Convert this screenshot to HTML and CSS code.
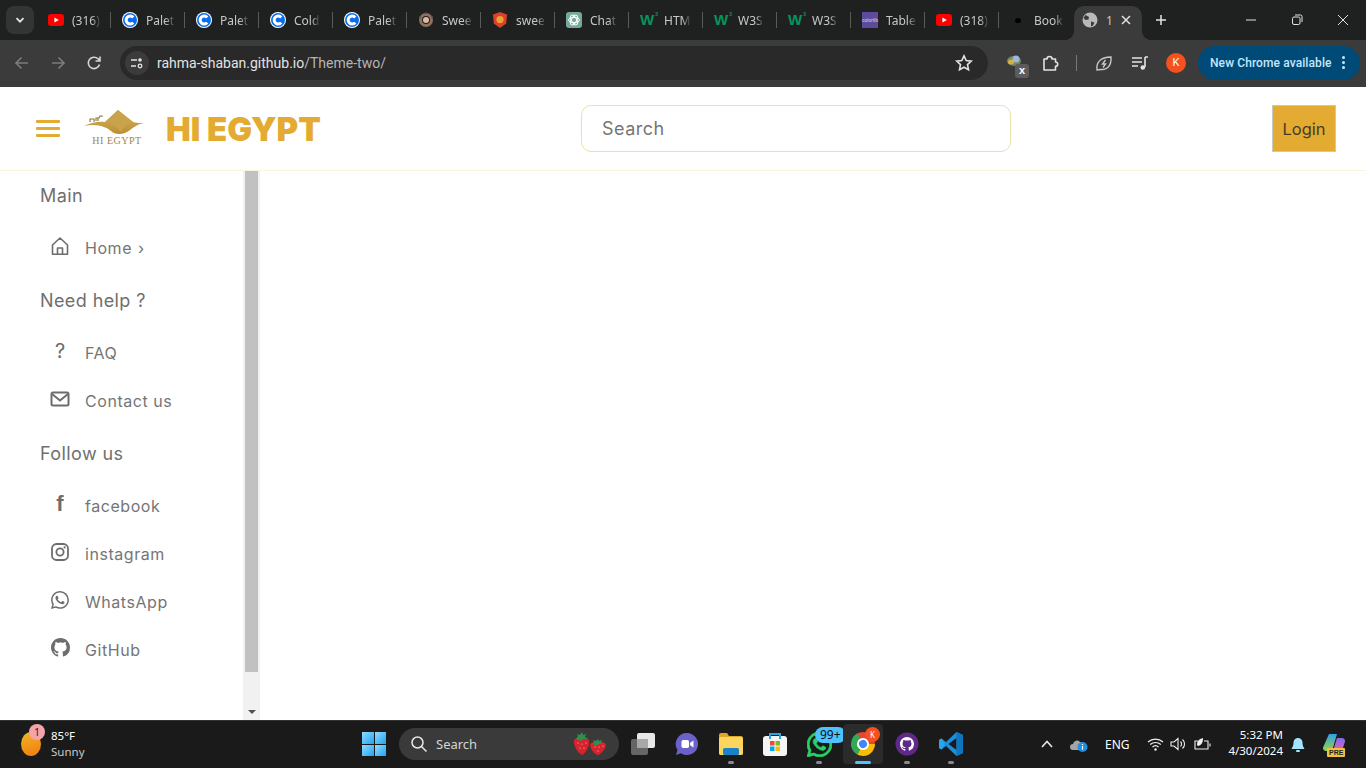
FILE: index.html
```html
<!DOCTYPE html>
<html lang="en">

<head>
    <meta charset="UTF-8">
    <title>HI EGYPT</title>
    <link rel="stylesheet" href="styles.css">
</head>

<body>

    <svg class="defs" width="0" height="0">
        <symbol id="yt" viewBox="0 0 16 12"><rect width="16" height="12" rx="3" fill="#f00"/><polygon points="6.4,3.4 10.8,6 6.4,8.6" fill="#fff"/></symbol>
        <symbol id="coolors" viewBox="0 0 16 16"><circle cx="8" cy="8" r="8" fill="#fff"/><circle cx="8" cy="8" r="7" fill="#0a6df0"/><path d="M11.2 5.4a4 4 0 1 0 0 5.2" fill="none" stroke="#fff" stroke-width="3"/></symbol>
        <symbol id="wicon" viewBox="0 0 16 16"><circle cx="8" cy="8" r="5.5" fill="none" stroke="#8d6f62" stroke-width="3"/><circle cx="8" cy="8" r="3" fill="#e0b9a0"/><circle cx="8" cy="1.2" r="1" fill="#555"/><circle cx="14" cy="5" r="1" fill="#555"/><circle cx="2" cy="5" r="1" fill="#555"/></symbol>
        <symbol id="shield" viewBox="0 0 16 16"><path d="M8 0l7 2.4-.8 9L8 16l-6.2-4.6-.8-9z" fill="#d9412c"/><circle cx="8" cy="7.6" r="3.6" fill="#eba02f"/></symbol>
        <symbol id="gpt" viewBox="0 0 16 16"><rect width="16" height="16" rx="3" fill="#74aa9c"/><g fill="none" stroke="#fff" stroke-width="1"><ellipse cx="8" cy="8" rx="5.4" ry="2.6"/><ellipse cx="8" cy="8" rx="5.4" ry="2.6" transform="rotate(60 8 8)"/><ellipse cx="8" cy="8" rx="5.4" ry="2.6" transform="rotate(120 8 8)"/></g></symbol>
        <symbol id="house" viewBox="0 0 20 20"><path d="M2.5 9 10 2l7.5 7v9.2h-15zM7.5 18v-6h5v6" fill="none" stroke="currentColor" stroke-width="1.6" stroke-linejoin="round"/></symbol>
        <symbol id="mail" viewBox="0 0 20 20"><rect x="1.5" y="3.5" width="17" height="13" rx="1.5" fill="none" stroke="currentColor" stroke-width="2"/><path d="m2 5 8 6.5L18 5" fill="none" stroke="currentColor" stroke-width="2"/></symbol>
        <symbol id="insta" viewBox="0 0 20 20"><rect x="2" y="2" width="16" height="16" rx="4.5" fill="none" stroke="currentColor" stroke-width="1.8"/><circle cx="10" cy="10" r="3.6" fill="none" stroke="currentColor" stroke-width="1.8"/><circle cx="14.6" cy="5.4" r="1.1" fill="currentColor"/></symbol>
        <symbol id="whats" viewBox="0 0 16 16"><path fill="currentColor" d="M13.601 2.326A7.854 7.854 0 0 0 7.994 0C3.627 0 .068 3.558.064 7.926c0 1.399.366 2.76 1.057 3.965L0 16l4.204-1.102a7.933 7.933 0 0 0 3.79.965h.004c4.368 0 7.926-3.558 7.93-7.93A7.898 7.898 0 0 0 13.6 2.326zM7.994 14.521a6.573 6.573 0 0 1-3.356-.92l-.24-.144-2.494.654.666-2.433-.156-.251a6.56 6.56 0 0 1-1.007-3.505c0-3.626 2.957-6.584 6.591-6.584a6.56 6.56 0 0 1 4.66 1.931 6.557 6.557 0 0 1 1.928 4.66c-.004 3.639-2.961 6.592-6.592 6.592zm3.615-4.934c-.197-.099-1.17-.578-1.353-.646-.182-.065-.315-.099-.445.099-.133.197-.513.646-.627.775-.114.133-.232.148-.43.05-.197-.1-.836-.308-1.592-.985-.59-.525-.985-1.175-1.103-1.372-.114-.198-.011-.304.088-.403.087-.088.197-.232.296-.346.1-.114.133-.198.198-.33.065-.134.034-.248-.015-.347-.05-.099-.445-1.076-.612-1.47-.16-.389-.323-.335-.445-.34-.114-.007-.247-.007-.38-.007a.729.729 0 0 0-.529.247c-.182.198-.691.677-.691 1.654 0 .977.71 1.916.81 2.049.098.133 1.394 2.132 3.383 2.992.47.205.84.326 1.129.418.475.152.904.129 1.246.08.38-.058 1.171-.48 1.338-.943.164-.464.164-.86.114-.943-.049-.084-.182-.133-.38-.232z"/></symbol>
        <symbol id="octo" viewBox="0 0 16 16"><path fill="currentColor" d="M8 0C3.58 0 0 3.58 0 8c0 3.54 2.29 6.53 5.47 7.59.4.07.55-.17.55-.38 0-.19-.01-.82-.01-1.49-2.01.37-2.53-.49-2.69-.94-.09-.23-.48-.94-.82-1.13-.28-.15-.68-.52-.01-.53.63-.01 1.08.58 1.23.82.72 1.21 1.87.87 2.33.66.07-.52.28-.87.51-1.07-1.78-.2-3.64-.89-3.64-3.95 0-.87.31-1.59.82-2.15-.08-.2-.36-1.02.08-2.12 0 0 .67-.21 2.2.82.64-.18 1.32-.27 2-.27.68 0 1.36.09 2 .27 1.53-1.04 2.2-.82 2.2-.82.44 1.1.16 1.92.08 2.12.51.56.82 1.27.82 2.15 0 3.07-1.87 3.75-3.65 3.95.29.25.54.73.54 1.48 0 1.07-.01 1.93-.01 2.2 0 .21.15.46.55.38A8.013 8.013 0 0016 8c0-4.42-3.58-8-8-8z"/></symbol>
    </svg>

    <div class="tabstrip">
        <div class="tab-menu">
            <svg width="12" height="12" viewBox="0 0 12 12"><path d="m2.5 4.2 3.5 3.5 3.5-3.5" fill="none" stroke="#e3e3e3" stroke-width="1.8"/></svg>
        </div>
        <div class="tab"><svg class="fav" viewBox="0 0 16 16"><use href="#yt" y="2" height="12" width="16"/></svg><span class="tab-name">(316)</span></div>
        <div class="tab"><svg class="fav"><use href="#coolors"/></svg><span class="tab-name">Palet</span></div>
        <div class="tab"><svg class="fav"><use href="#coolors"/></svg><span class="tab-name">Palet</span></div>
        <div class="tab"><svg class="fav"><use href="#coolors"/></svg><span class="tab-name">Cold</span></div>
        <div class="tab"><svg class="fav"><use href="#coolors"/></svg><span class="tab-name">Palet</span></div>
        <div class="tab"><svg class="fav"><use href="#wicon"/></svg><span class="tab-name">Swee</span></div>
        <div class="tab"><svg class="fav"><use href="#shield"/></svg><span class="tab-name">swee</span></div>
        <div class="tab"><svg class="fav"><use href="#gpt"/></svg><span class="tab-name">Chat</span></div>
        <div class="tab"><span class="w3">W<sup>3</sup></span><span class="tab-name">HTM</span></div>
        <div class="tab"><span class="w3">W<sup>3</sup></span><span class="tab-name">W3S</span></div>
        <div class="tab"><span class="w3">W<sup>3</sup></span><span class="tab-name">W3S</span></div>
        <div class="tab"><span class="colorlib">colorlib</span><span class="tab-name">Table</span></div>
        <div class="tab"><svg class="fav" viewBox="0 0 16 16"><use href="#yt" y="2" height="12" width="16"/></svg><span class="tab-name">(318)</span></div>
        <div class="tab last"><span class="fav book-dot"></span><span class="tab-name">Book</span></div>
        <div class="tab-active">
            <svg class="fav" viewBox="0 0 16 16"><circle cx="8" cy="8" r="7.5" fill="#b9b9b9"/><path d="M3.5 3 7 5l-.5 2.5L3.5 8l-2-2zM9 9.5l3.5 1-1.5 3L9 14.5z" fill="#3b3b3b"/></svg>
            <span class="tab-name short">1</span>
            <svg class="tab-x" width="10" height="10" viewBox="0 0 10 10"><path d="m1 1 8 8M9 1 1 9" stroke="#e3e3e3" stroke-width="1.5"/></svg>
        </div>
        <svg class="tab-plus" width="12" height="12" viewBox="0 0 12 12"><path d="M6 1v10M1 6h10" stroke="#e3e3e3" stroke-width="1.5"/></svg>
        <div class="win-ctrls">
            <svg width="12" height="12" viewBox="0 0 12 12"><path d="M1 6h10" stroke="#e3e3e3"/></svg>
            <svg width="12" height="12" viewBox="0 0 12 12"><rect x="1.5" y="3" width="7.5" height="7.5" rx="1.5" fill="none" stroke="#e3e3e3"/><path d="M4 1h5.5A1.5 1.5 0 0 1 11 2.5V8" fill="none" stroke="#e3e3e3"/></svg>
            <svg width="12" height="12" viewBox="0 0 12 12"><path d="m1 1 10 10M11 1 1 11" stroke="#e3e3e3"/></svg>
        </div>
    </div>

    <div class="toolbar">
        <div class="tool-btn"><svg width="16" height="16" viewBox="0 0 16 16"><path d="M14 8H2.5M7.5 2.5 2 8l5.500 5.500" fill="none" stroke="#7c7c7c" stroke-width="1.6"/></svg></div>
        <div class="tool-btn"><svg width="16" height="16" viewBox="0 0 16 16"><path d="M2 8h11.5M8.5 2.5 14 8l-5.500 5.500" fill="none" stroke="#7c7c7c" stroke-width="1.6"/></svg></div>
        <div class="tool-btn"><svg width="16" height="16" viewBox="0 0 16 16"><path d="M13.5 9.5A5.700 5.700 0 1 1 12 3.800L14 6M14 1.500V6H9.500" fill="none" stroke="#d5d5d5" stroke-width="1.6"/></svg></div>
        <div class="omnibox">
            <div class="site-info">
                <svg width="14" height="14" viewBox="0 0 14 14"><g fill="none" stroke="#e3e3e3" stroke-width="1.3"><path d="M1 4h6M1 10h5"/><circle cx="10" cy="4" r="1.8" fill="#e3e3e3" stroke="none"/><circle cx="10" cy="10" r="1.8"/></g></svg>
            </div>
            <span class="url">rahma-shaban.github.io<span class="url-path">/Theme-two/</span></span>
            <svg class="star" width="18" height="18" viewBox="0 0 18 18"><path d="m9 1.800 2.200 4.700 5.100.6-3.800 3.500 1 5.100L9 13.200l-4.500 2.500 1-5.100-3.800-3.500 5.100-.6z" fill="none" stroke="#e3e3e3" stroke-width="1.6"/></svg>
        </div>
        <div class="tool-right">
            <div class="tool-item">
                <svg class="ext-icon" width="16" height="14" viewBox="0 0 16 14"><ellipse cx="8" cy="7" rx="7" ry="5" fill="#6f8a5c"/><ellipse cx="5" cy="8" rx="3" ry="2.5" fill="#d8b13c"/><circle cx="10" cy="5" r="3.5" fill="#9db7d8"/></svg>
                <span class="ext-badge">x</span>
            </div>
            <div class="tool-item"><svg width="18" height="18" viewBox="0 0 18 18"><path d="M3 5h3a2.500 2.500 0 0 1 5 0h3.500v3a2.200 2.200 0 0 1 0 4.400V16H3z" fill="none" stroke="#e3e3e3" stroke-width="1.6" stroke-linejoin="round"/></svg></div>
            <span class="tool-sep"></span>
            <div class="tool-item"><svg width="18" height="18" viewBox="0 0 18 18"><path d="M2 16C1 9 5 3 16 3c.5 8-3 13-10 12.500zM10.500 6 7.500 10h3L8 13.500" fill="none" stroke="#c7c7c7" stroke-width="1.4"/></svg></div>
            <div class="tool-item"><svg width="18" height="18" viewBox="0 0 18 18"><path d="M1 4h10M1 8h10M1 12h6" stroke="#e3e3e3" stroke-width="1.6"/><path d="M14 3v10M14 3h3" stroke="#e3e3e3" stroke-width="1.6"/><circle cx="11.8" cy="13.5" r="2.3" fill="#e3e3e3"/></svg></div>
            <div class="tool-item"><span class="avatar">K</span></div>
            <div class="update-pill">New Chrome available<span class="dots"><i></i><i></i><i></i></span></div>
        </div>
    </div>

    <div class="page">
        <header class="site-header">
            <div class="brand">
                <div class="burger"><span></span><span></span><span></span></div>
                <div class="logo">
                    <svg width="62" height="27" viewBox="0 0 62 27">
                        <defs><linearGradient id="sand" x1="0" y1="0" x2="0" y2="1"><stop offset="0" stop-color="#d9b45c"/><stop offset="1" stop-color="#b98f35"/></linearGradient></defs>
                        <path d="M0 17C6 14 14 12 21 13L34 1 49 13C52 14 56 14 60 14 54 15 50 18 46 21 40 26 31 26 27 22 23 18 12 14 0 17z" fill="url(#sand)"/>
                        <path d="M34 1 49 13C44 15 39 18 37 23 33 18 28 15 21 13z" fill="#c9a24c"/>
                        <path d="M6 13v-3h4v3M12 12V9h3l1-2h2v1M14 9v3" stroke="#8a743f" stroke-width="1.1" fill="none"/>
                    </svg>
                    <span class="logo-text">HI EGYPT</span>
                </div>
                <h1 class="site-name">HI EGYPT</h1>
            </div>
            <input class="search" type="text" placeholder="Search">
            <button class="login">Login</button>
        </header>

        <div class="page-body">
            <aside class="sidebar">
                <div class="side-inner">
                    <h2 class="side-title">Main</h2>
                    <a class="side-link"><span class="side-icon"><svg width="20" height="20"><use href="#house"/></svg></span>Home <span class="caret">›</span></a>

                    <h2 class="side-title">Need help ?</h2>
                    <a class="side-link"><span class="side-icon glyph">?</span>FAQ</a>
                    <a class="side-link"><span class="side-icon"><svg width="20" height="20"><use href="#mail"/></svg></span>Contact us</a>

                    <h2 class="side-title">Follow us</h2>
                    <a class="side-link"><span class="side-icon glyph fb">f</span>facebook</a>
                    <a class="side-link"><span class="side-icon"><svg width="20" height="20"><use href="#insta"/></svg></span>instagram</a>
                    <a class="side-link"><span class="side-icon"><svg width="18" height="18"><use href="#whats"/></svg></span>WhatsApp</a>
                    <a class="side-link"><span class="side-icon"><svg width="19" height="19"><use href="#octo"/></svg></span>GitHub</a>
                </div>
                <div class="scrollbar">
                    <div class="thumb"></div>
                    <div class="arrow"></div>
                </div>
            </aside>
            <main class="content"></main>
        </div>
    </div>

    <footer class="taskbar">
        <div class="weather">
            <span class="sun"><span class="sun-badge">1</span></span>
            <div class="weather-text"><span>85°F</span><span class="dim">Sunny</span></div>
        </div>
        <div class="win-logo"><i></i><i></i><i></i><i></i></div>
        <div class="task-search">
            <svg width="18" height="18" viewBox="0 0 18 18"><circle cx="7.5" cy="7.5" r="5.5" fill="none" stroke="#e8e8e8" stroke-width="1.5"/><path d="m11.5 11.5 5 5" stroke="#e8e8e8" stroke-width="1.5"/></svg>
            <span>Search</span>
            <svg class="berries" width="34" height="24" viewBox="0 0 34 24">
                <path d="M1 8C4 4 13 4 16 8 17 14 13 21 9 23 5 21 0 14 1 8z" fill="#d8232f"/>
                <path d="M17 12C20 9 29 9 33 12 33 17 28 22 25 23 21 22 17 17 17 12z" fill="#d8232f"/>
                <path d="M3 7l2-3-1-2 3 1 2-3 1 3 3-1-1 3 3 2-5 0-2 2zM20 12l1-2-1-2 3 1 2-2 1 2 3-1-1 3 3 1-5 0-3 2z" fill="#2f8f4e"/>
                <g fill="#f6c9a0"><circle cx="5" cy="11" r=".6"/><circle cx="9" cy="12" r=".6"/><circle cx="13" cy="11" r=".6"/><circle cx="7" cy="16" r=".6"/><circle cx="11" cy="16" r=".6"/><circle cx="22" cy="15" r=".6"/><circle cx="26" cy="15" r=".6"/><circle cx="30" cy="14" r=".6"/><circle cx="25" cy="19" r=".6"/></g>
            </svg>
        </div>
        <div class="task-apps">
            <div class="app"><svg width="24" height="22" viewBox="0 0 24 22"><rect x="0" y="6" width="17" height="16" rx="2" fill="#666"/><rect x="6" y="0" width="18" height="15" rx="2" fill="#e8e8e8"/><rect x="6" y="6" width="11" height="9" fill="#a8a8a8"/></svg></div>
            <div class="app"><svg width="24" height="24" viewBox="0 0 24 24"><path d="M12 1a11 11 0 1 1-6 20.200L1 23l1.500-5A11 11 0 0 1 12 1z" fill="#6b62c9"/><rect x="6.5" y="8" width="7.5" height="8" rx="1.8" fill="#fff"/><path d="m15 11 3.500-2.500v7L15 13z" fill="#fff"/></svg></div>
            <div class="app open"><svg width="24" height="22" viewBox="0 0 24 22"><path d="M0 2a2 2 0 0 1 2-2h6l2 3h12a2 2 0 0 1 2 2v15a2 2 0 0 1-2 2H2a2 2 0 0 1-2-2z" fill="#e0a526"/><rect y="4" width="24" height="18" rx="2" fill="#fcd55f"/><rect x="4" y="15" width="16" height="7" rx="1.5" fill="#1a82c8"/></svg></div>
            <div class="app"><svg width="24" height="24" viewBox="0 0 24 24"><rect y="4" width="24" height="20" rx="3" fill="#f4f4f4"/><path d="M7 7V2h10v5" fill="none" stroke="#27a7e0" stroke-width="2"/><rect x="7" y="9" width="4.5" height="4.5" fill="#ee4d2d"/><rect x="12.5" y="9" width="4.5" height="4.5" fill="#7cb82f"/><rect x="7" y="14.5" width="4.5" height="4.5" fill="#00a4ef"/><rect x="12.5" y="14.5" width="4.5" height="4.5" fill="#ffb900"/></svg></div>
            <div class="app open">
                <svg class="whats-app" width="25" height="25"><use href="#whats"/></svg>
                <span class="count">99+</span>
            </div>
            <div class="app current">
                <span class="chrome"><span class="chrome-core"></span></span>
                <span class="chrome-badge">K</span>
            </div>
            <div class="app open"><svg width="24" height="24" viewBox="0 0 24 24"><circle cx="12" cy="12" r="11.5" fill="#5f2a87"/><svg x="5" y="5" width="14" height="14" class="octo-white"><use href="#octo"/></svg></svg></div>
            <div class="app open"><svg width="24" height="24" viewBox="0 0 24 24"><path d="M17.5 0 24 3v18l-6.500 3L7 14l-4.500 3.500L0 16V8l2.500-1.500L7 10z" fill="#1b8fd9"/><path d="M17.5 6v12L9.500 12z" fill="#1a1a1a"/><path d="M17.5 0 24 3v18l-6.500 3z" fill="#0f75bc"/><path d="m0 8 2.500-1.500L6 12l-3.500 5.500L0 16z" fill="#2aa5e8"/></svg></div>
        </div>
        <div class="tray">
            <svg class="tray-chev" width="12" height="8" viewBox="0 0 12 8"><path d="m1 7 5-5.500L11 7" fill="none" stroke="#e8e8e8" stroke-width="1.6"/></svg>
            <svg class="tray-cloud" width="18" height="14" viewBox="0 0 18 14"><path d="M3 12a3 3 0 0 1 0-6 4 4 0 0 1 7-2h3v8z" fill="#a5a5a5"/><circle cx="12.5" cy="9" r="5" fill="#1e90e0"/><path d="M12.5 8v3.500M12.500 6v1" stroke="#fff" stroke-width="1.2"/></svg>
            <span class="lang">ENG</span>
            <svg class="tray-wifi" width="17" height="14" viewBox="0 0 17 14"><g fill="none" stroke="#f0f0f0" stroke-width="1.2"><path d="M1 5a11 11 0 0 1 15 0M3.200 7.500a8 8 0 0 1 10.600 0M5.500 10a4.500 4.500 0 0 1 6 0"/></g><circle cx="8.5" cy="12.5" r="1.2" fill="#f0f0f0"/></svg>
            <svg class="tray-vol" width="17" height="14" viewBox="0 0 17 14"><path d="M1 5h3l4-3.500v11L4 9H1zM10.500 4.500a3.500 3.500 0 0 1 0 5M12.500 2.500a6 6 0 0 1 0 9" fill="none" stroke="#f0f0f0" stroke-width="1.1"/></svg>
            <svg class="tray-batt" width="18" height="14" viewBox="0 0 18 14"><path d="M4 4H1v8h13V4h-4M16 6.500v3" fill="none" stroke="#f0f0f0" stroke-width="1.1"/><path d="M3 8c0-4 2-6 6-7 0 4-1 7-5 8z" fill="#f0f0f0"/></svg>
            <div class="clock"><span>5:32 PM</span><span>4/30/2024</span></div>
            <svg class="tray-bell" width="16" height="16" viewBox="0 0 16 16"><path d="M8 1a4.500 4.500 0 0 1 4.500 4.500c0 4 1.500 5 2 6.500h-13c.5-1.500 2-2.500 2-6.500A4.500 4.500 0 0 1 8 1z" fill="#a5e4ff"/><rect x="6" y="13" width="4" height="2" rx="1" fill="#a5e4ff"/></svg>
            <div class="copilot">
                <svg width="24" height="19" viewBox="0 0 24 19">
                    <defs>
                        <linearGradient id="cop-a" x1="0" y1="0" x2="0" y2="1"><stop offset="0" stop-color="#2f9fe8"/><stop offset="1" stop-color="#9ad04a"/></linearGradient>
                        <linearGradient id="cop-b" x1="0" y1="0" x2="0" y2="1"><stop offset="0" stop-color="#7a6cf0"/><stop offset="1" stop-color="#ee5db5"/></linearGradient>
                    </defs>
                    <path d="M7 1h8l-5 17H4a3 3 0 0 1-3-3.500z" fill="url(#cop-a)"/>
                    <path d="M15 5h5a3 3 0 0 1 3 3.500L20 18h-9z" fill="url(#cop-b)"/>
                </svg>
                <span class="pre">PRE</span>
            </div>
        </div>
    </footer>

</body>

</html>
```

FILE: styles.css
```css
* {
    box-sizing: border-box;
}

html,
body {
    height: 100%;
}

body {
    margin: 0;
    overflow: hidden;
    background: #fff;
    font-family: "Noto Sans", "Liberation Sans", sans-serif;
}

.defs {
    display: block;
    height: 0;
}

/* browser tabs */
.tabstrip {
    height: 40px;
    background: #1f2121;
    display: flex;
    color: #c7c7c7;
    font-size: 12px;
    padding-left: 6px;
}

.tab-menu {
    width: 28px;
    height: 28px;
    margin: 6px 3px 0 0;
    border-radius: 8px;
    background: #333535;
    display: flex;
    align-items: center;
    justify-content: center;
}

.tab {
    position: relative;
    width: 74px;
    display: flex;
    align-items: center;
    gap: 8px;
    padding-left: 11px;
}

.tab::after {
    content: "";
    position: absolute;
    right: 0;
    top: 12px;
    height: 16px;
    width: 1px;
    background: #5a5a5a;
}

.tab.last::after {
    display: none;
}

.fav {
    width: 16px;
    height: 16px;
    flex: none;
}

.book-dot {
    display: flex;
    align-items: center;
    justify-content: center;
}

.book-dot::before {
    content: "";
    width: 6px;
    height: 5px;
    border-radius: 50%;
    background: #000;
}

.tab-name {
    -webkit-mask-image: linear-gradient(90deg, #000 70%, transparent 105%);
    mask-image: linear-gradient(90deg, #000 70%, transparent 105%);
    white-space: nowrap;
}

.tab-name.short {
    -webkit-mask-image: none;
    mask-image: none;
}

.w3 {
    position: relative;
    width: 16px;
    flex: none;
    color: #04955f;
    font: bold 15px/16px "Liberation Sans", sans-serif;
    letter-spacing: -1px;
    white-space: nowrap;
}

.w3 sup {
    position: absolute;
    right: -1px;
    top: -1px;
    font-size: 5px;
    line-height: 6px;
    color: #04955f;
}

.colorlib {
    width: 16px;
    height: 16px;
    flex: none;
    background: #5d4a9c;
    color: #ddd;
    font: 5px/16px "Liberation Sans", sans-serif;
    text-align: center;
}

.tab-active {
    position: relative;
    width: 68px;
    height: 34px;
    margin: 6px 0 0 1px;
    padding: 0 0 6px 8px;
    background: #3b3b3b;
    border-radius: 10px 10px 0 0;
    display: flex;
    align-items: center;
    gap: 8px;
}

.tab-active::before,
.tab-active::after {
    content: "";
    position: absolute;
    bottom: 0;
    width: 10px;
    height: 10px;
}

.tab-active::before {
    left: -10px;
    background: radial-gradient(circle at 0 0, transparent 10px, #3b3b3b 10.5px);
}

.tab-active::after {
    right: -10px;
    background: radial-gradient(circle at 100% 0, transparent 10px, #3b3b3b 10.5px);
}

.tab-plus {
    margin: 14px 0 0 13px;
}

.win-ctrls {
    margin-left: auto;
    width: 121px;
    padding-right: 17px;
    display: flex;
    align-items: center;
    justify-content: space-between;
}

/* toolbar */
.toolbar {
    height: 47px;
    background: #3b3b3b;
    display: flex;
    align-items: flex-start;
    padding: 6px 6px 0 4px;
}

.tool-btn {
    width: 36px;
    height: 34px;
    display: flex;
    align-items: center;
    justify-content: center;
}

.omnibox {
    width: 868px;
    height: 34px;
    margin-left: 8px;
    border-radius: 17px;
    background: #292929;
    display: flex;
    align-items: center;
    padding: 0 15px 0 5px;
}

.site-info {
    width: 24px;
    height: 24px;
    border-radius: 50%;
    background: #3b3b3b;
    display: flex;
    align-items: center;
    justify-content: center;
}

.url {
    margin: 0 0 1px 8px;
    color: #e3e3e3;
    font: 14px Roboto, sans-serif;
}

.url-path {
    color: #b5b5b5;
}

.star {
    margin-left: auto;
}

.tool-right {
    margin-left: 11px;
    display: flex;
    align-items: center;
}

.tool-item {
    position: relative;
    width: 34px;
    height: 34px;
    display: flex;
    align-items: center;
    justify-content: center;
}

.ext-icon {
    margin: -4px 4px 0 0;
}

.tool-sep {
    width: 1px;
    height: 16px;
    margin: 0 10px 0 9px;
    background: #777;
}

.tool-sep + .tool-item + .tool-item,
.tool-sep + .tool-item + .tool-item + .tool-item {
    margin-left: 2px;
}

.ext-badge {
    position: absolute;
    right: 4px;
    bottom: 2px;
    width: 14px;
    height: 14px;
    border-radius: 3px;
    background: #5c5c5c;
    color: #fff;
    font: bold 11px/13px "Liberation Sans", sans-serif;
    text-align: center;
}

.avatar {
    width: 20px;
    height: 20px;
    border-radius: 50%;
    background: #f4511e;
    color: #fff;
    font: 11px/20px Roboto, sans-serif;
    text-align: center;
}

.update-pill {
    width: 162px;
    height: 34px;
    margin-left: 5px;
    padding: 0 0 1px 12px;
    border-radius: 17px;
    background: #004a77;
    color: #c2e7ff;
    font: 500 12px Roboto, sans-serif;
    letter-spacing: .1px;
    display: flex;
    align-items: center;
    white-space: nowrap;
}

.dots {
    margin-left: 10px;
    display: flex;
    flex-direction: column;
    gap: 2px;
}

.dots i {
    width: 3px;
    height: 3px;
    border-radius: 50%;
    background: #c2e7ff;
}

/* the site */
.page {
    height: 633px;
    display: flex;
    flex-direction: column;
    font-family: Inter, "Noto Sans", sans-serif;
}

.site-header {
    height: 84px;
    flex: none;
    border-bottom: 1px solid #f8f3dc;
    display: flex;
    align-items: center;
    padding: 0 30px 0 36px;
}

.brand {
    width: 545px;
    display: flex;
    align-items: center;
}

.burger {
    width: 24px;
    display: flex;
    flex-direction: column;
    gap: 4px;
}

.burger span {
    height: 3px;
    background: #e3ab31;
    border-radius: 1px;
}

.logo {
    width: 62px;
    margin: 0 0 3px 24px;
    display: flex;
    flex-direction: column;
    align-items: center;
}

.logo-text {
    margin: -1px 0 0 4px;
    color: #9b8557;
    font: 10px/11px "Liberation Serif", serif;
    letter-spacing: .5px;
}

.site-name {
    margin: 0 0 0 20px;
    color: #e3ab31;
    font-size: 33px;
    font-weight: 900;
    white-space: nowrap;
}

.search {
    width: 430px;
    height: 47px;
    padding: 0 20px;
    border: 1px solid #ebe1a9;
    border-radius: 10px;
    background: #fff;
    font: 18px Inter, sans-serif;
    letter-spacing: .5px;
    outline: none;
}

.search::placeholder {
    color: #757575;
    opacity: 1;
}

.login {
    width: 64px;
    height: 47px;
    margin-left: auto;
    padding: 0;
    border: 1px solid #c8c8c8;
    background: #e3ab31;
    color: #4a3c25;
    font: 16.5px Inter, sans-serif;
}

.page-body {
    flex: 1;
    display: flex;
    min-height: 0;
}

.sidebar {
    width: 260px;
    flex: none;
    display: flex;
}

.side-inner {
    flex: 1;
    padding-top: 12px;
    color: #6f6f6f;
}

.side-title {
    height: 27px;
    margin: 16px 0 14px 40px;
    color: #6f6f6f;
    font-size: 18px;
    font-weight: 400;
    line-height: 25px;
    letter-spacing: .4px;
}

.side-title:first-child {
    margin-top: 0;
}

.side-link {
    height: 48px;
    display: flex;
    align-items: center;
    padding-left: 50px;
    color: #757575;
    font-size: 16px;
    letter-spacing: .55px;
    white-space: pre;
}

.side-icon {
    width: 20px;
    height: 22px;
    margin: 0 15px 5px 0;
    color: #6d6d6d;
    display: flex;
    align-items: center;
    justify-content: center;
    flex: none;
}

.glyph {
    font-size: 20px;
    letter-spacing: 0;
}

.fb {
    font: bold 22px "Liberation Sans", sans-serif;
}

.caret {
    margin-left: 1px;
}

.scrollbar {
    width: 17px;
    flex: none;
    background: #f1f1f1;
    display: flex;
    flex-direction: column;
    align-items: center;
}

.thumb {
    width: 13px;
    height: 501px;
    background: #c1c1c1;
}

.arrow {
    margin-top: auto;
    margin-bottom: 6px;
    border: 4px solid transparent;
    border-top: 4px solid #505050;
    border-bottom: 0;
}

.content {
    flex: 1;
}

/* windows taskbar */
.taskbar {
    height: 48px;
    padding-bottom: 1px;
    background: #1a1a1a;
    border-top: 1px solid #333;
    color: #fff;
    display: flex;
    align-items: center;
    position: relative;
}

.weather {
    width: 362px;
    display: flex;
    align-items: center;
    padding-left: 21px;
}

.sun {
    position: relative;
    width: 20px;
    height: 24px;
    border-radius: 50%;
    background: linear-gradient(160deg, #f0b62c, #f27a0a);
}

.sun-badge {
    position: absolute;
    left: 8px;
    top: -8px;
    width: 16px;
    height: 16px;
    border-radius: 50%;
    background: #f4a3ad;
    color: #222;
    font-size: 10.5px;
    line-height: 16px;
    text-align: center;
}

.weather-text {
    margin-left: 10px;
    display: flex;
    flex-direction: column;
    font-size: 11.5px;
    line-height: 16px;
}

.dim {
    color: #c9c9c9;
}

.win-logo {
    width: 24px;
    height: 24px;
    display: grid;
    grid-template-columns: 1fr 1fr;
    gap: 1px;
}

.win-logo i {
    background: linear-gradient(135deg, #8fdcff, #1fa3f5);
}

.task-search {
    width: 220px;
    height: 32px;
    margin-left: 13px;
    border-radius: 16px;
    background: #3a3a3a;
    display: flex;
    align-items: center;
    padding-left: 11px;
    gap: 8px;
    font-size: 13px;
    color: #d5d5d5;
}

.berries {
    margin-left: auto;
    margin-right: 12px;
}

.task-apps {
    display: flex;
    margin-left: 2px;
}

.app {
    position: relative;
    width: 44px;
    height: 40px;
    display: flex;
    align-items: center;
    justify-content: center;
}

.app.open::after,
.app.current::after {
    content: "";
    position: absolute;
    left: 19px;
    bottom: 0;
    width: 6px;
    height: 3px;
    border-radius: 2px;
    background: #8a8a8a;
}

.app.current {
    background: #2b2b2b;
    border-radius: 4px;
    width: 40px;
    margin: 0 2px;
}

.app.current::after {
    left: 12px;
    width: 16px;
    background: #4cc2ff;
}

.whats-app {
    color: #25d366;
    stroke: #25d366;
    stroke-width: .5;
}

.count {
    position: absolute;
    left: 18px;
    top: 3px;
    padding: 0 5px;
    height: 16px;
    border-radius: 8px;
    background: #4cc2ff;
    color: #111;
    font-size: 12px;
    line-height: 16px;
}

.chrome {
    width: 24px;
    height: 24px;
    border-radius: 50%;
    background: conic-gradient(#ea4335 0 33%, #fbbc04 33% 66%, #34a853 66% 100%);
    transform: rotate(-30deg);
    display: flex;
    align-items: center;
    justify-content: center;
}

.chrome-core {
    width: 12px;
    height: 12px;
    border: 2px solid #fff;
    border-radius: 50%;
    background: #4285f4;
}

.chrome-badge {
    position: absolute;
    right: 3px;
    top: 3px;
    width: 15px;
    height: 15px;
    border-radius: 50%;
    background: #f4511e;
    color: #fff;
    font-size: 8px;
    line-height: 15px;
    text-align: center;
}

.octo-white {
    color: #fff;
}

.tray {
    position: absolute;
    inset: 0;
    pointer-events: none;
}

.tray > * {
    position: absolute;
}

.tray-chev {
    left: 1041px;
    top: 19px;
}

.tray-cloud {
    left: 1070px;
    top: 17px;
}

.lang {
    left: 1105px;
    top: 15px;
    font-size: 12px;
}

.tray-wifi {
    left: 1147px;
    top: 16px;
}

.tray-vol {
    left: 1170px;
    top: 16px;
}

.tray-batt {
    left: 1194px;
    top: 16px;
}

.clock {
    right: 83px;
    top: 6px;
    display: flex;
    flex-direction: column;
    align-items: flex-end;
    font-size: 11.5px;
    line-height: 16px;
}

.tray-bell {
    left: 1290px;
    top: 16px;
}

.copilot {
    left: 1322px;
    top: 12px;
    width: 24px;
    height: 24px;
}

.pre {
    position: absolute;
    left: 5px;
    bottom: 0;
    padding: 0 2px;
    border-radius: 1px;
    background: #f3c23c;
    color: #222;
    font: bold 7px/9px "Liberation Sans", sans-serif;
}
```
